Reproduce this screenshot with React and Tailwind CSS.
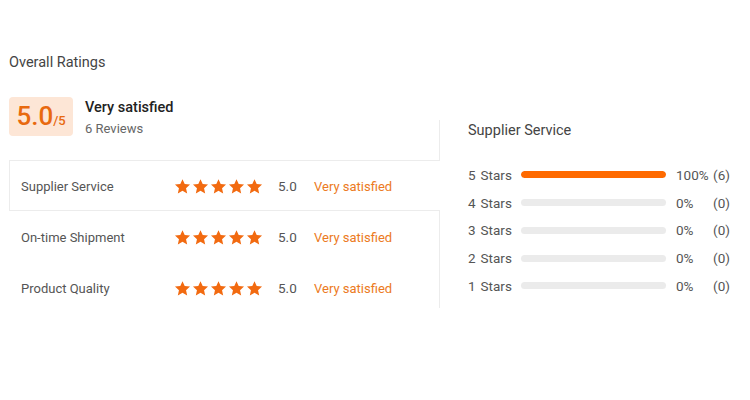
import React from "react";

const Star = () => (
  <svg width="17" height="17" viewBox="0 0 24 24" className="block">
    <path
      d="M12 1.6l3.1 6.9 7.5.8-5.6 5.1 1.6 7.4L12 18l-6.6 3.8L7 14.4 1.4 9.3l7.5-.8z"
      fill="#f26a10"
    />
  </svg>
);

const Stars = () => (
  <div className="flex gap-[1px]">
    <Star />
    <Star />
    <Star />
    <Star />
    <Star />
  </div>
);

const rows = [
  { label: "Supplier Service", active: true },
  { label: "On-time Shipment" },
  { label: "Product Quality" },
];

const dist = [
  { n: 5, pct: 100, count: 6 },
  { n: 4, pct: 0, count: 0 },
  { n: 3, pct: 0, count: 0 },
  { n: 2, pct: 0, count: 0 },
  { n: 1, pct: 0, count: 0 },
];

export default function App() {
  return (
    <div className="w-[750px] h-[400px] bg-white font-['Roboto',sans-serif] text-[#333]">
      <div className="pt-[53px] pl-[9px] text-[14.5px] leading-[20px] text-[#444]">
        Overall Ratings
      </div>
      <div className="flex items-start mt-[24px] pl-[9px]">
        <div className="w-[430px] flex flex-col">
          <div className="flex items-start h-[40px]">
            <div className="w-[64px] h-[39px] rounded-[4px] bg-[#fde6d6] flex items-baseline justify-center pt-[3px] text-[#e8690f] font-medium">
              <span className="text-[26px] leading-[32px]">5.0</span>
              <span className="text-[13px] leading-[16px]">/5</span>
            </div>
            <div className="ml-[12px] pt-[2px] flex flex-col">
              <div className="text-[14.5px] leading-[18px] font-medium text-[#222]">
                Very satisfied
              </div>
              <div className="mt-[4px] text-[13px] leading-[16px] text-[#666]">
                6 Reviews
              </div>
            </div>
          </div>
          <div className="mt-[23px] flex flex-col">
            {rows.map((r) => (
              <div
                key={r.label}
                className={
                  "h-[51px] flex items-center pl-[11px] pt-[2px] text-[13px] " +
                  (r.active
                    ? "w-[431px] relative z-10 bg-white border-t border-b border-l border-[#ececec]"
                    : "w-[430px] border-t border-b border-l border-transparent")
                }
              >
                <div className="w-[153px] text-[#555]">{r.label}</div>
                <Stars />
                <div className="ml-[15px] w-[36px] text-[13.5px] text-[#555]">5.0</div>
                <div className="text-[#ec7a22]">Very satisfied</div>
              </div>
            ))}
          </div>
        </div>
        <div className="mt-[23px] w-[310px] h-[188px] border-l border-[#ececec] pl-[28px]">
          <div className="pt-[1px] text-[14.5px] leading-[20px] text-[#444]">
            Supplier Service
          </div>
          <div className="mt-[20px] flex flex-col text-[13.5px] text-[#555]">
            {dist.map((d) => (
              <div key={d.n} className="h-[27.75px] flex items-center">
                <div className="w-[53px] flex">
                  <span>{d.n}</span>
                  <span className="ml-[5px]">Stars</span>
                </div>
                <div className="w-[145px] h-[7px] rounded-full bg-[#ebebeb] overflow-hidden">
                  <div
                    className="h-full rounded-full bg-[#ff6a00]"
                    style={{ width: `${d.pct}%` }}
                  />
                </div>
                <div className="ml-[10px] w-[36px]">{d.pct}%</div>
                <div className="w-[18px] text-right">({d.count})</div>
              </div>
            ))}
          </div>
        </div>
      </div>
    </div>
  );
}
